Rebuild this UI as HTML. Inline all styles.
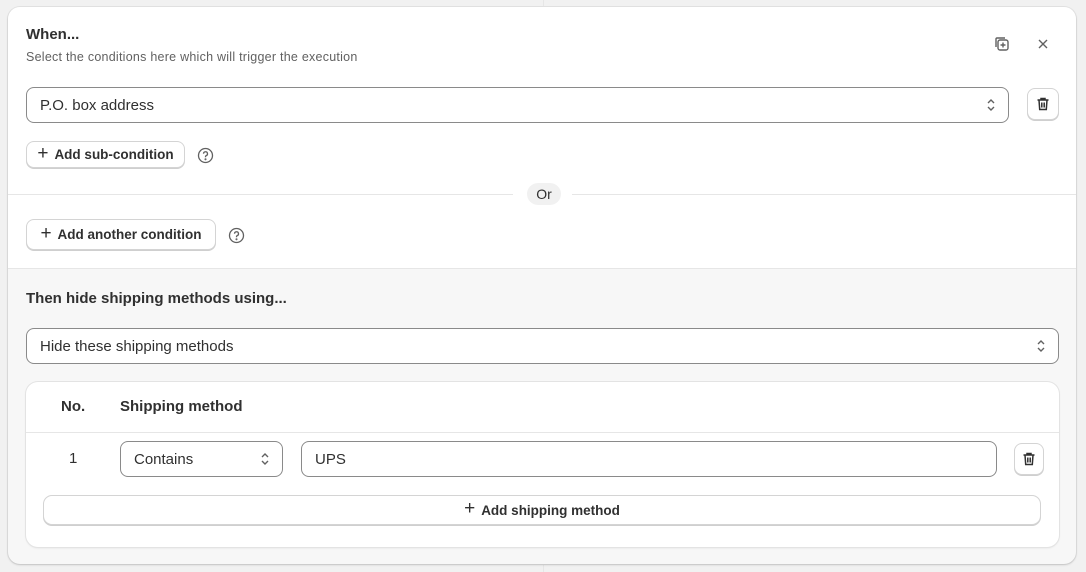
<!DOCTYPE html>
<html><head><style>
*{box-sizing:border-box;margin:0;padding:0}
body{width:1086px;height:572px;background:#f1f1f1;font-family:"Liberation Sans",sans-serif;color:#303030;position:relative;overflow:hidden}
.vl{position:absolute;left:543px;top:0;width:1px;height:572px;background:#e6e6e6}
.card{position:absolute;left:8px;top:7px;width:1068px;height:557px;background:#f7f7f7;border-radius:12px;box-shadow:0 1px 2px rgba(0,0,0,.15),0 0 0 1px #e3e3e3;overflow:hidden}
.top{position:absolute;left:0;top:0;width:1068px;height:262px;background:#fff;border-bottom:1px solid #e6e6e6}
.a{position:absolute}
.sel{position:absolute;border:1px solid #8a8a8a;border-radius:8px;background:#fff;font-size:15px;padding-left:13px;display:flex;align-items:center;color:#303030}
.btn{position:absolute;border:1px solid #d4d4d4;border-radius:8px;background:#fff;box-shadow:0 1px 0 #cfcfcf;font-size:13.5px;font-weight:bold;display:flex;align-items:center;justify-content:center;gap:6px;color:#303030}
.chev{position:absolute;right:12px;top:50%;margin-top:-8px}
</style></head><body>
<div class="vl"></div>
<div class="card">
 <div class="top">
  <div class="a" style="left:18px;top:19px;font-size:15px;font-weight:bold">When...</div>
  <div class="a" style="left:18px;top:43px;font-size:12.5px;letter-spacing:.25px;color:#616161">Select the conditions here which will trigger the execution</div>
  <svg class="a" style="left:985px;top:28px" width="18" height="18" viewBox="0 0 18 18" fill="none" stroke="#616161" stroke-width="1.4"><rect x="5" y="5" width="10" height="10" rx="2"/><path d="M3 12V4a1 1 0 0 1 1-1h8"/><path d="M10 7.5v5M7.5 10h5"/></svg>
  <svg class="a" style="left:1029px;top:31px" width="12" height="12" viewBox="0 0 12 12" stroke="#616161" stroke-width="1.4"><path d="M2 2l8 8M10 2l-8 8"/></svg>
  <div class="sel" style="left:18px;top:80px;width:983px;height:36px">P.O. box address
   <svg class="chev" width="10" height="16" viewBox="0 0 10 16" fill="none" stroke="#616161" stroke-width="1.4"><path d="M2 6l3-3 3 3M2 10l3 3 3-3"/></svg></div>
  <div class="btn" style="left:1019px;top:81px;width:32px;height:32px"><svg width="16" height="16" viewBox="0 0 16 16" fill="none" stroke="#303030" stroke-width="1.5"><path d="M2.5 4h11M6 4V2.5h4V4M4 4l.7 9.5h6.6L12 4M6.8 6.5v5M9.2 6.5v5"/></svg></div>
  <div class="btn" style="left:18px;top:134px;width:159px;height:27px"><span style="font-size:19px;font-weight:normal;margin-top:-2px">+</span>Add sub-condition</div>
  <svg class="a" style="left:189px;top:140px" width="17" height="17" viewBox="0 0 17 17" fill="none" stroke="#616161" stroke-width="1.3"><circle cx="8.5" cy="8.5" r="7"/><path d="M6.5 6.7a2 2 0 1 1 2.5 2c-.4.2-.5.5-.5 1v.6"/><circle cx="8.5" cy="12.3" r=".4" fill="#616161"/></svg>
  <div class="a" style="left:0;top:187px;width:505px;height:1px;background:#e6e6e6"></div>
  <div class="a" style="left:564px;top:187px;width:504px;height:1px;background:#e6e6e6"></div>
  <div class="a" style="left:519px;top:176px;width:34px;height:22px;background:#f1f1f1;border-radius:11px;font-size:14px;text-align:center;line-height:22px">Or</div>
  <div class="btn" style="left:18px;top:212px;width:190px;height:31px"><span style="font-size:19px;font-weight:normal;margin-top:-2px">+</span>Add another condition</div>
  <svg class="a" style="left:220px;top:220px" width="17" height="17" viewBox="0 0 17 17" fill="none" stroke="#616161" stroke-width="1.3"><circle cx="8.5" cy="8.5" r="7"/><path d="M6.5 6.7a2 2 0 1 1 2.5 2c-.4.2-.5.5-.5 1v.6"/><circle cx="8.5" cy="12.3" r=".4" fill="#616161"/></svg>
 </div>
 <div class="a" style="left:18px;top:283px;font-size:15px;font-weight:bold">Then hide shipping methods using...</div>
 <div class="sel" style="left:18px;top:321px;width:1033px;height:36px">Hide these shipping methods
  <svg class="chev" width="10" height="16" viewBox="0 0 10 16" fill="none" stroke="#616161" stroke-width="1.4"><path d="M2 6l3-3 3 3M2 10l3 3 3-3"/></svg></div>
 <div class="a" style="left:18px;top:375px;width:1033px;height:165px;background:#fff;border-radius:12px;box-shadow:0 0 0 1px #e3e3e3,0 1px 2px rgba(0,0,0,.1)">
  <div class="a" style="left:35px;top:16px;font-size:15px;font-weight:bold">No.</div>
  <div class="a" style="left:94px;top:16px;font-size:15px;font-weight:bold">Shipping method</div>
  <div class="a" style="left:0;top:50px;width:1033px;height:1px;background:#e6e6e6"></div>
  <div class="a" style="left:43px;top:68px;font-size:15px">1</div>
  <div class="sel" style="left:94px;top:59px;width:163px;height:36px">Contains
   <svg class="chev" width="10" height="16" viewBox="0 0 10 16" fill="none" stroke="#616161" stroke-width="1.4"><path d="M2 6l3-3 3 3M2 10l3 3 3-3"/></svg></div>
  <div class="sel" style="left:275px;top:59px;width:696px;height:36px">UPS</div>
  <div class="btn" style="left:988px;top:61px;width:30px;height:32px"><svg width="16" height="16" viewBox="0 0 16 16" fill="none" stroke="#303030" stroke-width="1.5"><path d="M2.5 4h11M6 4V2.5h4V4M4 4l.7 9.5h6.6L12 4M6.8 6.5v5M9.2 6.5v5"/></svg></div>
  <div class="btn" style="left:17px;top:113px;width:998px;height:30px;border-radius:9px"><span style="font-size:19px;font-weight:normal;margin-top:-2px">+</span>Add shipping method</div>
 </div>
</div>
</body></html>
